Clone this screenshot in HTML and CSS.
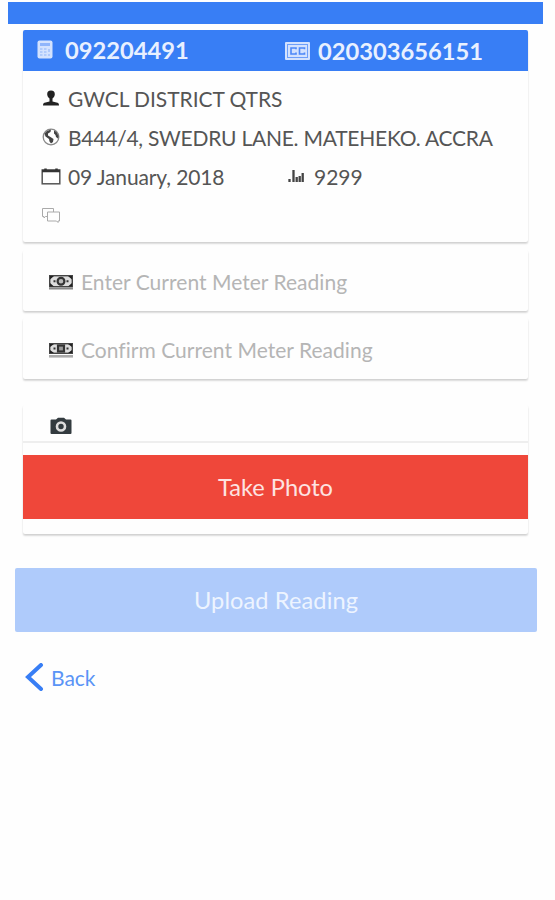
FILE: index.html
```html
<!DOCTYPE html>
<html lang="en">
  <head>
    <meta charset="UTF-8" />
    <meta name="viewport" content="width=device-width, initial-scale=1.0" />
    <title>Meter Reading</title>
    <link rel="stylesheet" href="styles.css">
  </head>
  <body>
    <div class="status-bar"></div>

    <div class="card customer">
      <div class="card-header">
        <div class="meter-no">
          <svg class="icon-calc" width="16" height="19" viewBox="0 0 16 19">
            <rect x="0.5" y="0.5" width="15" height="18" rx="2" fill="#d3e2fe" />
            <rect x="3" y="3" width="10" height="3" fill="#8fb5fb" />
            <path d="M3 9h2.5M7 9h2.5M3 12h2.5M7 12h2.5M3 15h2.5M7 15h2.5M12 9v3M12 14v2" stroke="#a5c4fc" stroke-width="1.6" />
          </svg>
          <span>092204491</span>
        </div>
        <div class="account-no">
          <svg class="icon-cc" width="25" height="18" viewBox="0 0 25 18">
            <rect width="25" height="18" rx="1" fill="#d3e2fe" />
            <rect x="2.5" y="2.5" width="20" height="13" fill="none" stroke="#6d9ffa" stroke-width="1" />
            <path d="M11 7.3V6H6v6h5v-1.5M19.5 7.3V6h-5v6h5v-1.5" fill="none" stroke="#4c88f8" stroke-width="1.6" />
          </svg>
          <span>020303656151</span>
        </div>
      </div>
      <div class="card-body">
        <div class="row">
          <svg class="icon" width="20" height="18" viewBox="0 0 20 18">
            <path d="M10 1.500c2.600 0 4 1.500 3.800 4-.1 2-1.300 3.200-2.300 4v3l5 1.300c1 .3 1.500 1.200 1.500 2.700H2c0-1.500.5-2.400 1.500-2.700l5-1.300v-3c-1-.8-2.200-2-2.300-4-.2-2.500 1.200-4 3.800-4z" fill="#222" />
          </svg>
          <span class="name">GWCL DISTRICT QTRS</span>
        </div>
        <div class="row">
          <svg class="icon" width="20" height="18" viewBox="0 0 20 18">
            <circle cx="10" cy="9" r="7.800" fill="#fff" stroke="#888" stroke-width="1.300" />
            <path d="M3.500 5.500L6 3l4-1.500-.5 2.500-2.500 1.500v2L9.500 9l3 2-.5 3-2 1.500-1.500-2L8 11 4.500 8.500zM13 2.500l2.500 1.500 2 4-.5 2.500-2-1.500-.5-2L13 5.500z" fill="#444" />
          </svg>
          <span class="address">B444/4, SWEDRU LANE. MATEHEKO. ACCRA</span>
        </div>
        <div class="row">
          <div class="date">
            <svg class="icon" width="20" height="18" viewBox="0 0 20 18">
              <rect x="1.200" y="3" width="17.600" height="13.800" fill="none" stroke="#555" stroke-width="1.500" />
              <path d="M1 4h18M4.500 1.500V5M15.500 1.500V5" stroke="#333" stroke-width="2.500" />
            </svg>
            <span class="day">09 January, 2018</span>
          </div>
          <div class="last-reading">
            <svg class="icon-stats" width="16" height="14" viewBox="0 0 16 14">
              <path d="M1.500 10v3M5.500 1v12M8.700 8v5M11.700 7v6M14.700 4v9" stroke="#444" stroke-width="2.300" />
            </svg>
            <span>9299</span>
          </div>
        </div>
        <div class="row">
          <svg class="icon" width="20" height="18" viewBox="0 0 20 18">
            <path d="M6 10.500H4.500L3 12v-1.500H1.500v-8h11V6M6.500 6h12v9H17v1.500L15.500 15h-9z" fill="none" stroke="#aaa" />
          </svg>
        </div>
      </div>
    </div>

    <div class="card field">
      <svg class="icon-cash" width="24" height="15" viewBox="0 0 24 15">
        <rect x="0.700" y="0.700" width="22.600" height="11" fill="#ddd" stroke="#444" stroke-width="1.400" />
        <path d="M1 1h4L1 4.500zM23 1h-4l4 3.500zM1 11.500h4L1 8zM23 11.500h-4L23 8z" fill="#222" />
        <circle cx="12" cy="6.200" r="3.400" fill="#bbb" stroke="#333" stroke-width="2.200" />
        <path d="M4.500 6.200h2M17.500 6.200h2" stroke="#333" stroke-width="2" />
        <path d="M0 13.500h24" stroke="#888" stroke-width="2" />
      </svg>
      <span class="placeholder">Enter Current Meter Reading</span>
    </div>

    <div class="card field confirm">
      <svg class="icon-cash" width="24" height="15" viewBox="0 0 24 15">
        <rect x="0.700" y="0.700" width="22.600" height="9.600" fill="#ddd" stroke="#444" stroke-width="1.400" />
        <path d="M1 1h4L1 4zM23 1h-4l4 3zM1 10h4L1 7zM23 10h-4L23 7z" fill="#222" />
        <rect x="9" y="2.500" width="6" height="6" fill="#999" stroke="#333" stroke-width="2.200" />
        <path d="M4.500 5.500h2M17.500 5.500h2" stroke="#333" stroke-width="2" />
        <path d="M0 13.300h24" stroke="#aaa" stroke-width="2.600" />
      </svg>
      <span class="placeholder">Confirm Current Meter Reading</span>
    </div>

    <div class="card photo">
      <div class="photo-head">
        <svg width="22" height="18" viewBox="0 0 22 18">
          <path d="M1.500 2.500H6L8 .8h6l2 1.700h4.500q1 0 1 1v12.500q0 1-1 1h-19q-1 0-1-1V3.500q0-1 1-1z" fill="#333b3f" />
          <circle cx="11" cy="9.500" r="4" fill="none" stroke="#ddd" stroke-width="2.600" />
        </svg>
      </div>
      <button class="btn take-photo">Take Photo</button>
    </div>

    <button class="btn upload">Upload Reading</button>

    <a class="back">
      <svg width="19" height="28" viewBox="0 0 19 28">
        <path d="M16 2L3 14l13 12" fill="none" stroke="#387ef5" stroke-width="4" stroke-linecap="round" />
      </svg>
      <span>Back</span>
    </a>
  </body>
</html>
```
FILE: styles.css
```css
body {
  margin: 0;
  padding: 2px 12px 0 8px;
  background-color: #fefefe;
  color: #555;
  font-family: Lato, sans-serif;
  font-size: 21px;
}

svg {
  flex: none;
  display: block;
}

.status-bar {
  height: 22px;
  background-color: #387ef5;
}

.card {
  margin: 0 15px;
  background-color: #fefefe;
  border-radius: 2px;
  box-shadow: 0 2px 2px rgba(0, 0, 0, 0.13), 0 1px 2px rgba(0, 0, 0, 0.07);
}

.customer {
  margin-top: 6px;
  height: 212px;
}

.card-header {
  display: flex;
  height: 41px;
  background-color: #387ef5;
  border-radius: 2px 2px 0 0;
  color: #e8f0ff;
  font-size: 23.7px;
  font-weight: bold;
}

.meter-no,
.account-no {
  display: flex;
  align-items: center;
}

.meter-no {
  width: 248px;
  padding: 0 0 2px 14px;
  gap: 12px;
}

.account-no {
  gap: 8px;
}

.card-body {
  padding: 8px 18px 0;
}

.row,
.date,
.last-reading {
  display: flex;
  align-items: center;
  height: 39px;
}

.row span {
  padding-bottom: 1px;
}

.row .icon {
  margin: -1px 7px 0 0;
}

.row .name {
  letter-spacing: -0.05px;
}

.row .address {
  letter-spacing: -0.24px;
}

.row .day {
  letter-spacing: -0.13px;
}

.date {
  width: 247px;
}

.last-reading {
  gap: 10px;
}

.last-reading svg {
  margin-top: -1px;
}

.field {
  display: flex;
  align-items: center;
  height: 61px;
  margin-top: 8px;
  padding-left: 26px;
  gap: 8px;
}

.icon-cash {
  margin-top: 4px;
}

.confirm {
  margin-top: 7px;
}

.placeholder {
  color: #b5b5b5;
  padding-top: 2px;
  letter-spacing: 0.03px;
}

.photo {
  margin-top: 26px;
  height: 129px;
}

.photo-head {
  display: flex;
  align-items: center;
  height: 38px;
  padding: 5px 0 0 27px;
  margin-bottom: 12px;
  box-sizing: border-box;
  border-bottom: 2px solid #eee;
}

.btn {
  display: block;
  height: 64px;
  border: none;
  padding: 0;
  font-family: inherit;
  font-size: 23.6px;
}

.take-photo {
  width: 100%;
  background-color: #ef473a;
  color: #fde3e1;
}

.upload {
  width: 522px;
  margin: 34px 0 0 7px;
  border-radius: 2px;
  background-color: #afcbfb;
  color: #edf4ff;
  letter-spacing: 0.1px;
}

.back {
  display: flex;
  align-items: center;
  gap: 7px;
  margin: 31px 0 0 17px;
  color: #5a94f6;
}
```
